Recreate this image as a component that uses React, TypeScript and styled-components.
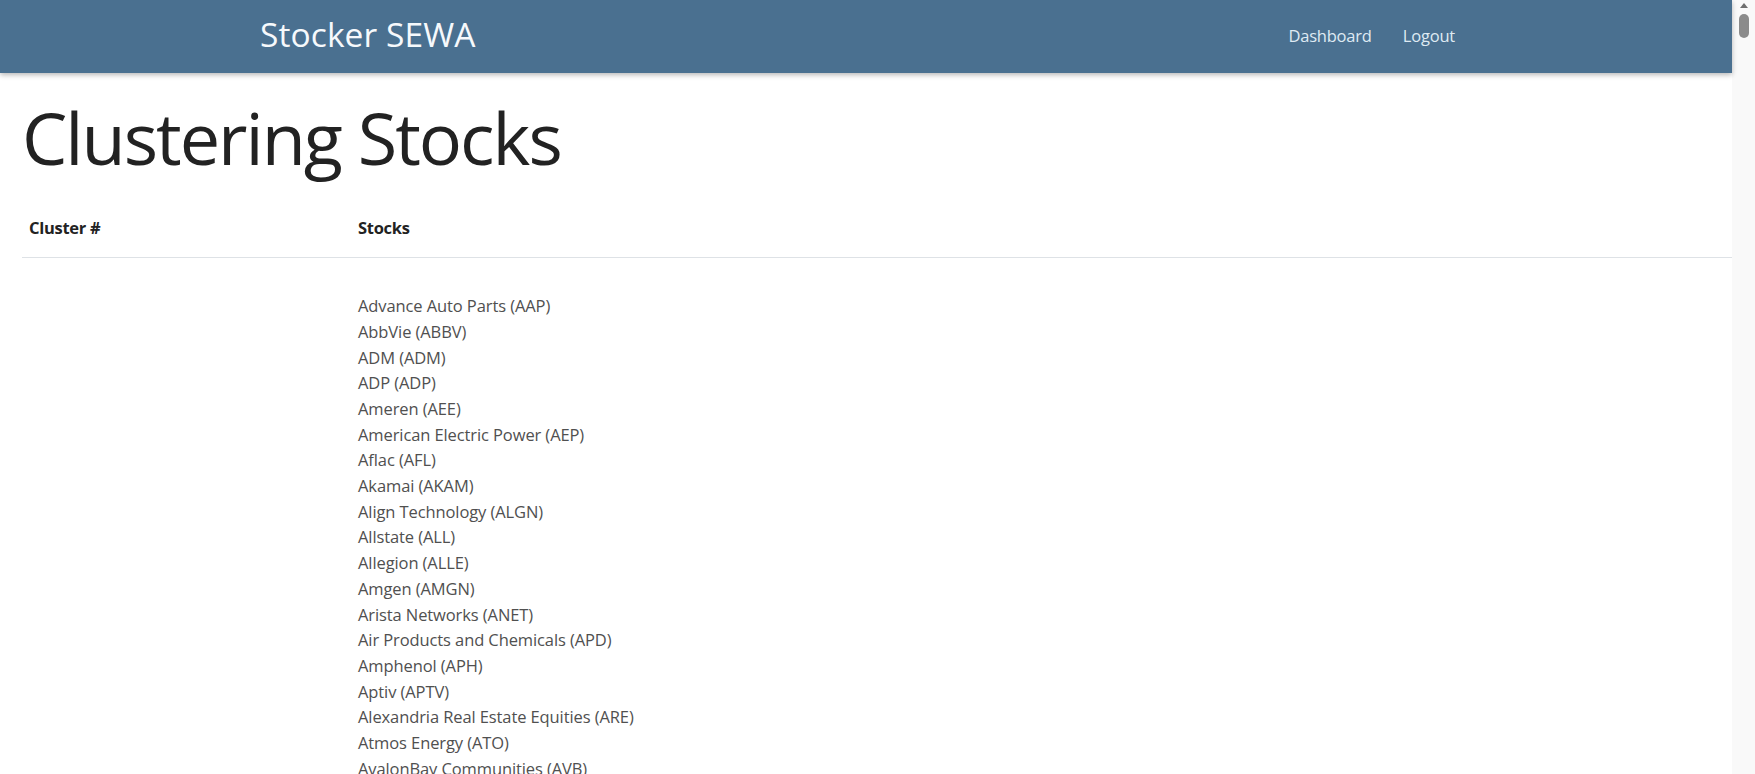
import React from "react";
import styled, { createGlobalStyle } from "styled-components";

const GlobalStyle = createGlobalStyle`
  html, body {
    margin: 0;
    padding: 0;
    background: #ffffff;
  }
  body {
    font-family: "Open Sans", "Noto Sans", "Liberation Sans", sans-serif;
    color: #212529;
    font-size: 17px;
    line-height: 1.5;
  }
`;

const Shell = styled.div`
  display: flex;
  align-items: stretch;
  min-height: 100vh;
`;

const Page = styled.div`
  flex: 1;
  min-width: 0;
`;

const ScrollRail = styled.div`
  width: 23px;
  flex: 0 0 23px;
  background: #f9f9f9;
`;

const RailInner = styled.div`
  position: sticky;
  top: 0;
  height: 100vh;
  display: flex;
  flex-direction: column;
  align-items: center;
  padding-top: 3px;
  box-sizing: border-box;
`;

const UpArrow = styled.div`
  width: 0;
  height: 0;
  border-left: 4px solid transparent;
  border-right: 4px solid transparent;
  border-bottom: 5px solid #6f6f6f;
  margin-left: 1px;
`;

const Thumb = styled.div`
  width: 10px;
  height: 24px;
  border-radius: 5px;
  background: #8b8b8b;
  margin-top: 6px;
  margin-left: 1px;
`;

const NavBar = styled.header`
  height: 73px;
  background: #4a7090;
  box-shadow: 0 2px 5px rgba(0, 0, 0, 0.28);
  display: flex;
  align-items: center;
  justify-content: space-between;
  padding: 0 261px 0 260px;
  position: relative;
  z-index: 1;
`;

const Brand = styled.a`
  font-size: 33.5px;
  color: #f6f9fc;
  text-decoration: none;
  letter-spacing: 0.1px;
  line-height: 1;
  padding-bottom: 3px;
`;

const NavLinks = styled.nav`
  display: flex;
  align-items: center;
`;

const NavLink = styled.a`
  font-size: 16.5px;
  color: #dfeaf3;
  text-decoration: none;
  padding: 0 16px;
  letter-spacing: -0.2px;
  &:first-child {
    margin-right: -1px;
  }
`;

const Main = styled.main`
  padding: 0 0 0 22px;
`;

const Title = styled.h1`
  margin: 21px 0 20px;
  font-size: 72px;
  font-weight: 400;
  line-height: 1.2;
  letter-spacing: -2px;
  color: #222;
`;

const Table = styled.table`
  width: 100%;
  border-collapse: collapse;
`;

const HeadCell = styled.th<{ $width?: string }>`
  text-align: left;
  font-weight: 700;
  font-size: 16.5px;
  padding: 16px 7px 16px;
  width: ${(p) => p.$width ?? "auto"};
  border-bottom: 1px solid #dee2e6;
  color: #222;
  letter-spacing: -0.3px;
`;

const Cell = styled.td<{ $align?: string }>`
  padding: 35px 7px 16px;
  vertical-align: ${(p) => p.$align ?? "top"};
  font-size: 16.5px;
  color: #505050;
`;

const StockList = styled.ul`
  list-style: none;
  margin: 0;
  padding: 0;
`;

const StockItem = styled.li`
  line-height: 25.7px;
  letter-spacing: -0.1px;
  white-space: nowrap;
`;

const clusters: { id: number; stocks: string[] }[] = [
  {
    id: 0,
    stocks: [
      "Advance Auto Parts (AAP)",
      "AbbVie (ABBV)",
      "ADM (ADM)",
      "ADP (ADP)",
      "Ameren (AEE)",
      "American Electric Power (AEP)",
      "Aflac (AFL)",
      "Akamai (AKAM)",
      "Align Technology (ALGN)",
      "Allstate (ALL)",
      "Allegion (ALLE)",
      "Amgen (AMGN)",
      "Arista Networks (ANET)",
      "Air Products and Chemicals (APD)",
      "Amphenol (APH)",
      "Aptiv (APTV)",
      "Alexandria Real Estate Equities (ARE)",
      "Atmos Energy (ATO)",
      "AvalonBay Communities (AVB)",
      "Avery Dennison (AVY)",
      "American Water Works (AWK)",
      "AutoZone (AZO)",
      "Baxter International (BAX)",
      "Becton Dickinson (BDX)",
      "Brown–Forman (BF.B)",
      "BNY Mellon (BK)",
      "Bristol Myers Squibb (BMY)",
      "Broadridge Financial Solutions (BR)",
      "Brown & Brown (BRO)",
      "Boston Scientific (BSX)",
      "Cardinal Health (CAH)",
      "Cboe Global Markets (CBOE)",
      "Church & Dwight (CHD)",
      "Colgate-Palmolive (CL)",
      "Clorox (CLX)",
      "CME Group (CME)",
      "CMS Energy (CMS)",
      "CenterPoint Energy (CNP)",
      "Campbell Soup (CPB)",
      "Cisco (CSCO)",
      "Dominion Energy (D)",
      "Dollar General (DG)",
      "Quest Diagnostics (DGX)",
      "Duke Energy (DUK)",
      "Consolidated Edison (ED)",
      "Edison International (EIX)",
      "Entergy (ETR)",
      "Evergy (EVRG)",
      "Exelon (EXC)",
      "FirstEnergy (FE)",
      "General Mills (GIS)",
      "Hershey (HSY)",
      "Johnson & Johnson (JNJ)",
      "Kellogg (K)",
      "Kimberly-Clark (KMB)",
      "Coca-Cola (KO)",
      "Merck (MRK)",
      "NextEra Energy (NEE)",
      "PepsiCo (PEP)",
      "Procter & Gamble (PG)",
    ],
  },
  {
    id: 1,
    stocks: [
      "Apple (AAPL)",
      "Adobe (ADBE)",
      "Applied Materials (AMAT)",
      "AMD (AMD)",
      "Amazon (AMZN)",
      "Broadcom (AVGO)",
      "Salesforce (CRM)",
      "Alphabet (GOOGL)",
      "Intel (INTC)",
      "Microsoft (MSFT)",
      "Nvidia (NVDA)",
    ],
  },
];

export default function App() {
  return (
    <>
      <GlobalStyle />
      <Shell>
        <Page>
          <NavBar>
            <Brand href="#">Stocker SEWA</Brand>
            <NavLinks>
              <NavLink href="#">Dashboard</NavLink>
              <NavLink href="#">Logout</NavLink>
            </NavLinks>
          </NavBar>
          <Main>
            <Title>Clustering Stocks</Title>
            <Table>
              <thead>
                <tr>
                  <HeadCell $width="315px">Cluster #</HeadCell>
                  <HeadCell>Stocks</HeadCell>
                </tr>
              </thead>
              <tbody>
                {clusters.map((c) => (
                  <tr key={c.id}>
                    <Cell $align="middle">{c.id}</Cell>
                    <Cell>
                      <StockList>
                        {c.stocks.map((s) => (
                          <StockItem key={s}>{s}</StockItem>
                        ))}
                      </StockList>
                    </Cell>
                  </tr>
                ))}
              </tbody>
            </Table>
          </Main>
        </Page>
        <ScrollRail>
          <RailInner>
            <UpArrow />
            <Thumb />
          </RailInner>
        </ScrollRail>
      </Shell>
    </>
  );
}
